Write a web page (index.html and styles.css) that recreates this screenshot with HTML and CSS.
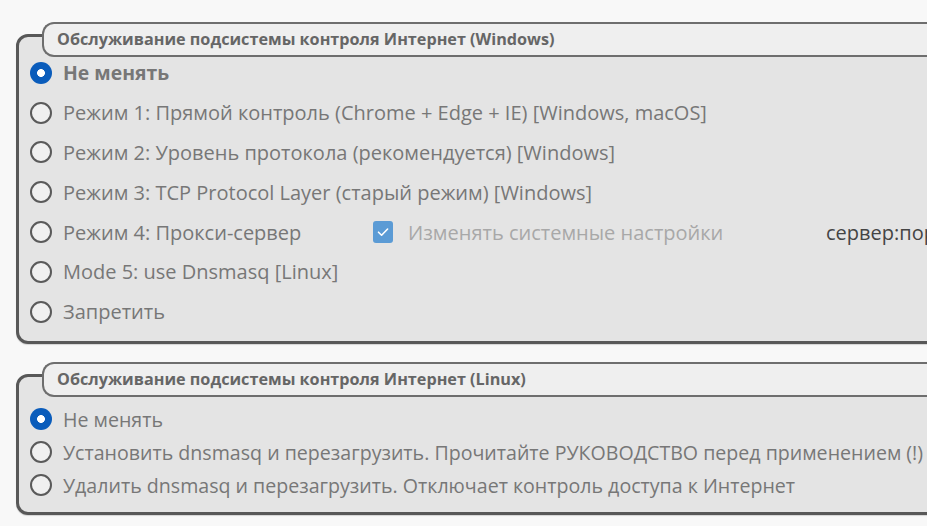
FILE: index.html
```html
<!DOCTYPE html>
<html lang="ru">
<head>
<meta charset="utf-8">
<link rel="stylesheet" href="styles.css">
</head>
<body>
<div class="page">
  <section class="group group-win">
    <div class="legend">Обслуживание подсистемы контроля Интернет (Windows)</div>
    <div class="options">
      <div class="row"><span class="radio checked"></span><span class="label bold">Не менять</span></div>
      <div class="row"><span class="radio"></span><span class="label">Режим 1: Прямой контроль (Chrome + Edge + IE) [Windows, macOS]</span></div>
      <div class="row"><span class="radio"></span><span class="label">Режим 2: Уровень протокола (рекомендуется) [Windows]</span></div>
      <div class="row"><span class="radio"></span><span class="label">Режим 3: TCP Protocol Layer (старый режим) [Windows]</span></div>
      <div class="row">
        <span class="radio"></span><span class="label proxy">Режим 4: Прокси-сервер</span>
        <span class="checkbox"><svg viewBox="0 0 20 20" width="20" height="20"><path d="M5.5 10.2 L8.6 13.2 L14.6 7" fill="none" stroke="#fff" stroke-width="1.6" stroke-linecap="round" stroke-linejoin="round"/></svg></span>
        <span class="label disabled">Изменять системные настройки</span>
        <span class="server">сервер:порт</span>
      </div>
      <div class="row"><span class="radio"></span><span class="label">Mode 5: use Dnsmasq [Linux]</span></div>
      <div class="row"><span class="radio"></span><span class="label">Запретить</span></div>
    </div>
  </section>
  <section class="group group-linux">
    <div class="legend">Обслуживание подсистемы контроля Интернет (Linux)</div>
    <div class="options">
      <div class="row"><span class="radio checked"></span><span class="label">Не менять</span></div>
      <div class="row"><span class="radio"></span><span class="label">Установить dnsmasq и перезагрузить. Прочитайте РУКОВОДСТВО перед применением (!)</span></div>
      <div class="row"><span class="radio"></span><span class="label">Удалить dnsmasq и перезагрузить. Отключает контроль доступа к Интернет</span></div>
    </div>
  </section>
</div>
</body>
</html>
```

FILE: styles.css
```css
html, body {
  margin: 0;
  padding: 0;
  background: #f8f8f8;
  overflow: hidden;
  width: 927px;
  height: 526px;
}
.page {
  padding: 34px 0 0 16px;
  font-family: "Open Sans", "Noto Sans", sans-serif;
}
.group {
  width: 1000px;
  border: 3px solid #585858;
  border-radius: 12px;
  background: #e4e4e4;
  box-shadow: 0 1px 1px rgba(0,0,0,0.15);
}
.group-linux {
  margin-top: 30px;
}
.legend {
  margin: -15px 0 0 23px;
  height: 31px;
  border: 2px solid #6e6e6e;
  border-right: none;
  border-radius: 12px 0 0 12px;
  background: #efefef;
  padding-left: 13px;
  font-weight: bold;
  font-size: 16.2px;
  line-height: 31px;
  color: #666;
  white-space: nowrap;
}
.options {
  display: flex;
  flex-direction: column;
}
.group-win .options {
  padding: 0 0 9px 11px;
  margin-top: -4px;
}
.group-win .row { height: 39.8px; }
.group-win .label { font-size: 20px; }
.group-linux .options {
  padding: 6px 0 10px 11px;
}
.group-linux .row { height: 33px; }
.group-linux .label { font-size: 19.6px; }
.row {
  display: flex;
  align-items: center;
  white-space: nowrap;
}
.radio {
  box-sizing: border-box;
  width: 22px;
  height: 22px;
  border-radius: 50%;
  border: 2px solid #5a5a5a;
  background: #f0f0f0;
  margin-right: 11px;
  flex: none;
}
.radio.checked {
  border: none;
  background: radial-gradient(circle, #fff 0 3.6px, #0a5cbb 4.2px);
}
.label {
  color: #777;
}
.label.bold {
  font-weight: bold;
}
.group-win .label.bold { font-size: 19.4px; }
.proxy {
  width: 310px;
}
.checkbox {
  width: 20px;
  height: 22px;
  border-radius: 3px;
  background: #5b9bd5;
  display: flex;
  align-items: center;
  justify-content: center;
  margin-right: 15px;
  flex: none;
}
.label.disabled {
  color: #a8a8a8;
  width: 418px;
}
.server {
  font-size: 20px;
  color: #444;
}
```
